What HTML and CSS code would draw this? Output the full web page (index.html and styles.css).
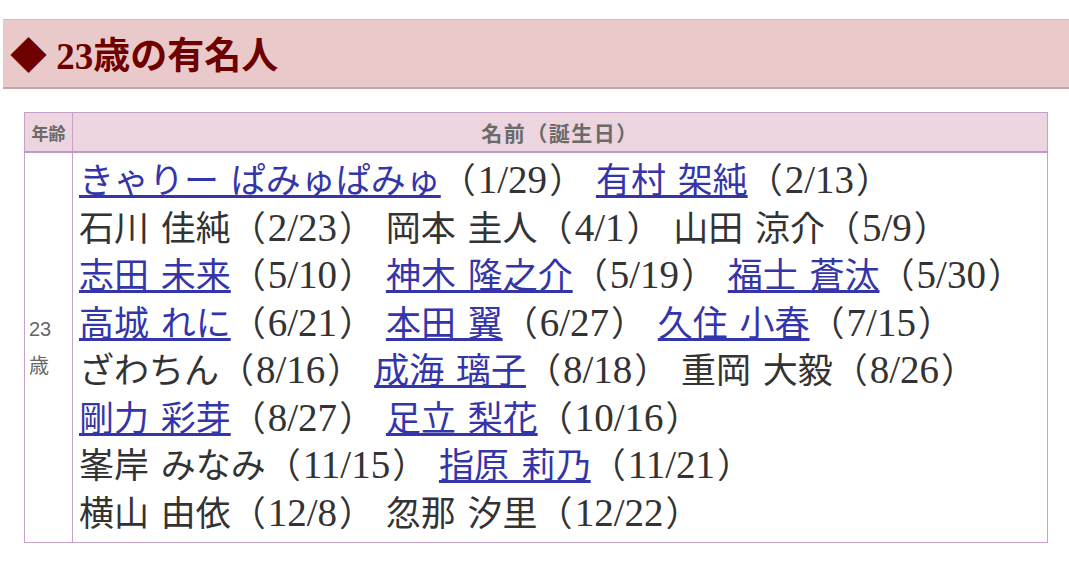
FILE: index.html
```html
<!DOCTYPE html>
<html lang="ja">
<head>
<meta charset="utf-8">
<title>23歳の有名人</title>
<link rel="stylesheet" href="styles.css">
</head>
<body>
<h2 class="title"><span class="mark">◆</span> 23歳の有名人</h2>
<table class="celeb">
  <colgroup><col class="col-age"><col></colgroup>
  <thead>
    <tr><th class="h-age">年齢</th><th class="h-name">名前（誕生日）</th></tr>
  </thead>
  <tbody>
    <tr>
      <td class="age">23歳</td>
      <td class="names">
        <a href="#">きゃりー ぱみゅぱみゅ</a>（<time>1/29</time>） <a href="#">有村 架純</a>（<time>2/13</time>）<br>
        石川 佳純（<time>2/23</time>） 岡本 圭人（<time>4/1</time>） 山田 涼介（<time>5/9</time>）<br>
        <a href="#">志田 未来</a>（<time>5/10</time>） <a href="#">神木 隆之介</a>（<time>5/19</time>） <a href="#">福士 蒼汰</a>（<time>5/30</time>）<br>
        <a href="#">高城 れに</a>（<time>6/21</time>） <a href="#">本田 翼</a>（<time>6/27</time>） <a href="#">久住 小春</a>（<time>7/15</time>）<br>
        ざわちん（<time>8/16</time>） <a href="#">成海 璃子</a>（<time>8/18</time>） 重岡 大毅（<time>8/26</time>）<br>
        <a href="#">剛力 彩芽</a>（<time>8/27</time>） <a href="#">足立 梨花</a>（<time>10/16</time>）<br>
        峯岸 みなみ（<time>11/15</time>） <a href="#">指原 莉乃</a>（<time>11/21</time>）<br>
        横山 由依（<time>12/8</time>） 忽那 汐里（<time>12/22</time>）
      </td>
    </tr>
  </tbody>
</table>
</body>
</html>
```
FILE: styles.css
```css
html, body {
  margin: 0;
  padding: 0;
  background: #ffffff;
}

body {
  font-family: "Liberation Serif", "Noto Sans CJK JP", serif;
  color: #333333;
}

.title {
  margin: 19px 0 0 3px;
  box-sizing: border-box;
  height: 70px;
  display: flex;
  align-items: center;
  padding: 0 0 2px 7px;
  background: #eac9ca;
  border-top: 1px solid #d9b4b9;
  border-bottom: 2px solid #c6a6a8;
  font-family: "Liberation Serif", "Noto Sans CJK JP", serif;
  font-size: 37px;
  font-weight: bold;
  color: #6e0000;
  white-space: pre;
}

.mark {
  font-family: "Noto Sans CJK JP", sans-serif;
  font-size: 37px;
}

.celeb {
  margin: 23px 0 0 24px;
  width: 1024px;
  border-collapse: collapse;
  table-layout: fixed;
  border: 1px solid #a58ea6;
}

.col-age {
  width: 48px;
}

.celeb th {
  height: 38px;
  padding: 0;
  background: #ecd5de;
  color: #6a6a6a;
  font-weight: bold;
  border: 1px solid #c7a2c8;
  border-bottom: 2px solid #be98c8;
  vertical-align: middle;
}

.h-age {
  font-size: 17px;
}

.h-name {
  font-size: 21px;
  letter-spacing: 1.5px;
}

.celeb td {
  border: 1px solid #c7a2c8;
  vertical-align: middle;
}

.age {
  padding: 0 3px 0 4px;
  font-family: "Liberation Sans", "Noto Sans CJK JP", sans-serif;
  font-size: 20px;
  line-height: 37px;
  color: #666666;
}

.names {
  padding: 5px 4px 4px 6px;
  font-size: 35px;
  line-height: 47.5px;
  word-spacing: 3px;
  color: #333333;
  white-space: nowrap;
}

.names time {
  padding: 0 2px;
  font-size: 39px;
  line-height: 1;
  word-spacing: normal;
}

.names a {
  color: #3535aa;
  text-decoration: underline;
}
```
